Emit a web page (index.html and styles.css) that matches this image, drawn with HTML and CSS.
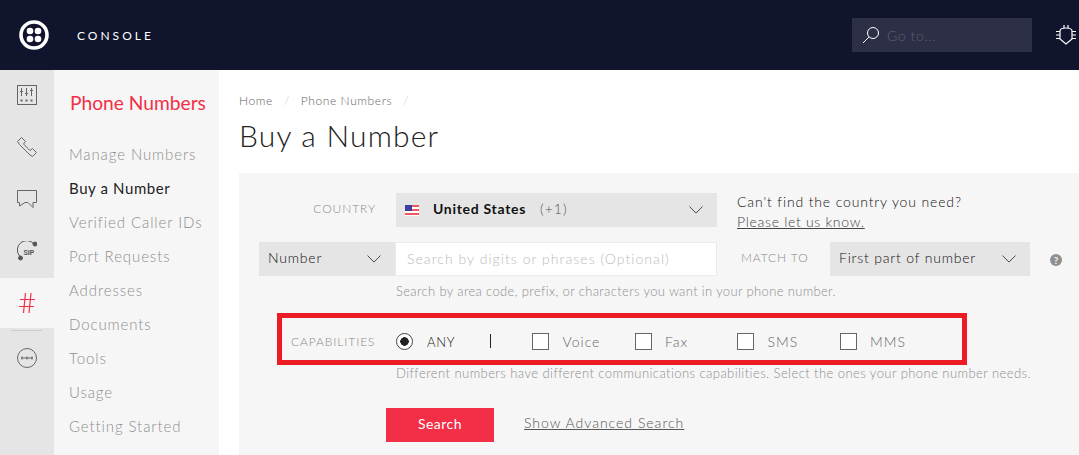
FILE: index.html
```html
<!DOCTYPE html>
<html lang="en">

<head>
    <meta charset="UTF-8">
    <title>Buy a Number</title>
    <link rel="stylesheet" href="styles.css">
</head>

<body>
    <header class="topbar">
        <svg class="logo" width="30" height="30" viewBox="0 0 30 30">
            <circle cx="15" cy="15" r="13" fill="none" stroke="#fff" stroke-width="3.6"/>
            <circle cx="11" cy="11" r="3.3" fill="#fff"/>
            <circle cx="19" cy="11" r="3.3" fill="#fff"/>
            <circle cx="11" cy="19" r="3.3" fill="#fff"/>
            <circle cx="19" cy="19" r="3.3" fill="#fff"/>
        </svg>
        <span class="brand">CONSOLE</span>
        <div class="goto">
            <svg width="18" height="18" viewBox="0 0 18 18" fill="none" stroke="#fff" stroke-width="1">
                <circle cx="11" cy="7" r="5.5"/>
                <path d="M7 11 L1 17"/>
            </svg>
            <span>Go to...</span>
        </div>
        <svg class="bug" width="20" height="22" viewBox="0 0 20 22" fill="none" stroke="#fff" stroke-width="1.2">
            <path d="M4 7 Q4 4 10 4 Q16 4 16 7 V15 L10 20 L4 15 Z"/>
            <path d="M8 1 V4 M12 1 V4 M0 7.500 H4 M16 7.500 H20 M0 11 H4 M16 11 H20 M0 14.500 H4 M16 14.500 H20"/>
        </svg>
    </header>

    <div class="page">
        <nav class="iconbar">
            <a class="icon">
                <svg width="20" height="20" viewBox="0 0 20 20" fill="none" stroke="#666">
                    <rect x="0.500" y="0.500" width="19" height="19"/>
                    <path d="M4.500 3 V11 M9.500 3 V11 M14.500 3 V11 M3 6.500 H6 M8 8.500 H11 M13 5.500 H16"/>
                    <path d="M3.500 15.500 H5.500 M8.500 15.500 H10.500 M13.500 15.500 H15.500" stroke-width="2"/>
                </svg>
            </a>
            <a class="icon">
                <svg width="20" height="20" viewBox="0 0 20 20" fill="none" stroke="#666">
                    <path d="M0.500 4.500 L4.500 0.500 L8.500 4.500 L6.500 7 L13 13.500 L15.500 11.500 L19.500 15.500 L15.500 19.500 L13 18 L2.500 7.500 Z"/>
                </svg>
            </a>
            <a class="icon">
                <svg width="20" height="18" viewBox="0 0 20 18" fill="none" stroke="#666">
                    <path d="M0.500 0.500 H19.500 V12.500 H16 V17.500 L11 12.500 H8 L2.500 16 V12.500 H0.500 Z"/>
                </svg>
            </a>
            <a class="icon">
                <svg width="20" height="20" viewBox="0 0 20 20" fill="none" stroke="#555">
                    <path d="M2.500 15 A8.500 8.500 0 0 1 17 3"/>
                    <circle cx="18" cy="3" r="2" fill="#555"/>
                    <circle cx="3.500" cy="17" r="2" fill="#555"/>
                    <text x="6.500" y="13.500" class="sip">SIP</text>
                </svg>
            </a>
            <a class="icon icon-active">
                <svg width="16" height="20" viewBox="0 0 16 20" fill="none" stroke="#f22f46" stroke-width="1.2">
                    <path d="M6.500 0 L4.500 20 M12 0 L10 20 M1 6.500 H16 M0 13.500 H15"/>
                </svg>
            </a>
            <div class="icon-line"></div>
            <a class="icon">
                <svg width="20" height="20" viewBox="0 0 20 20" fill="none" stroke="#666">
                    <circle cx="10" cy="10" r="9.500"/>
                    <path d="M4 10 H16 M5 8.500 V11.500 M10 8.500 V11.500 M15 8.500 V11.500" stroke-width="1.200"/>
                </svg>
            </a>
        </nav>

        <aside class="sidenav">
            <h2>Phone Numbers</h2>
            <ul>
                <li>Manage Numbers</li>
                <li class="current">Buy a Number</li>
                <li>Verified Caller IDs</li>
                <li>Port Requests</li>
                <li>Addresses</li>
                <li>Documents</li>
                <li>Tools</li>
                <li>Usage</li>
                <li>Getting Started</li>
            </ul>
        </aside>

        <main class="content">
            <div class="crumbs">
                <span>Home</span><i>/</i><span>Phone Numbers</span><i>/</i>
            </div>
            <h1>Buy a Number</h1>

            <section class="panel">
                <div class="row row-country">
                    <label class="field-label label-country">COUNTRY</label>
                    <div class="select select-country">
                        <svg class="flag" width="14" height="11" viewBox="0 0 14 11">
                            <rect width="14" height="11" fill="#fff"/>
                            <path d="M0 1 H14 M0 5 H14 M0 9 H14" stroke="#e8202c" stroke-width="1.500"/>
                            <rect width="7" height="6" fill="#3c3f9c"/>
                        </svg>
                        <b>United States</b>
                        <span class="code">(+1)</span>
                        <svg class="chev" width="14" height="8" viewBox="0 0 16 9" fill="none" stroke="#333"><path d="M0.500 0.500 L8 8 L15.500 0.500"/></svg>
                    </div>
                    <div class="cant">
                        <p>Can't find the country you need?</p>
                        <a>Please let us know.</a>
                    </div>
                </div>

                <div class="row row-search">
                    <div class="select select-type">
                        <span>Number</span>
                        <svg class="chev" width="14" height="8" viewBox="0 0 16 9" fill="none" stroke="#333"><path d="M0.500 0.500 L8 8 L15.500 0.500"/></svg>
                    </div>
                    <div class="search-input">Search by digits or phrases (Optional)</div>
                    <label class="field-label label-match">MATCH TO</label>
                    <div class="select select-match">
                        <span>First part of number</span>
                        <svg class="chev" width="14" height="8" viewBox="0 0 16 9" fill="none" stroke="#333"><path d="M0.500 0.500 L8 8 L15.500 0.500"/></svg>
                    </div>
                    <span class="help">?</span>
                </div>
                <p class="hint hint-search">Search by area code, prefix, or characters you want in your phone number.</p>

                <div class="caps">
                    <label class="field-label label-caps">CAPABILITIES</label>
                    <span class="radio"></span>
                    <span class="cap-any">ANY</span>
                    <span class="cap-sep"></span>
                    <span class="check"></span><span class="cap cap-wide">Voice</span>
                    <span class="check"></span><span class="cap cap-wide">Fax</span>
                    <span class="check"></span><span class="cap cap-wide">SMS</span>
                    <span class="check"></span><span class="cap">MMS</span>
                </div>
                <p class="hint hint-caps">Different numbers have different communications capabilities. Select the ones your phone number needs.</p>

                <div class="actions">
                    <button class="btn">Search</button>
                    <a class="advanced">Show Advanced Search</a>
                </div>
            </section>
        </main>
    </div>
</body>

</html>
```

FILE: styles.css
```css
/* General Styles */

body {
    font-family: 'Lato', sans-serif;
    font-weight: 300;
    margin: 0;
    height: 455px;
    overflow: hidden;
    background: #fff;
    color: #222;
}

/* Top bar */

.topbar {
    height: 70px;
    background: #10142c;
    display: flex;
    align-items: center;
    padding-left: 19px;
    color: #fff;
}

.brand {
    margin-left: 28px;
    font-size: 12px;
    font-weight: 400;
    letter-spacing: 3px;
}

.goto {
    margin-left: auto;
    width: 180px;
    height: 34px;
    box-sizing: border-box;
    padding-left: 10px;
    background: #2c2f45;
    display: flex;
    align-items: center;
    gap: 7px;
    font-size: 14px;
    letter-spacing: 0.6px;
    color: #5c5f70;
}

.bug {
    margin: 0 3px 0 24px;
}

/* Columns */

.page {
    display: flex;
    height: 385px;
}

.iconbar {
    width: 54px;
    background: #e5e5e5;
    display: flex;
    flex-direction: column;
    gap: 2px;
}

.icon {
    height: 50px;
    flex: none;
    display: flex;
    align-items: center;
    justify-content: center;
}

.icon-active {
    background: #f6f6f6;
}

.icon-line {
    height: 1px;
    flex: none;
    margin: 0 12px 0 11px;
    background: #ccc;
}

.sip {
    font-family: 'Roboto', sans-serif;
    font-size: 7px;
    font-weight: 700;
    fill: #555;
    stroke: none;
}

.sidenav {
    width: 165px;
    background: #f6f6f6;
    padding-left: 15px;
    box-sizing: border-box;
}

.sidenav h2 {
    margin: 21px 0 0 1px;
    font-size: 19.2px;
    line-height: 24px;
    font-weight: 400;
    color: #f22f46;
}

.sidenav ul {
    list-style: none;
    margin: 22px 0 0;
    padding: 0;
}

.sidenav li {
    height: 34px;
    line-height: 34px;
    font-size: 15px;
    letter-spacing: 0.9px;
    color: #8f8f8f;
}

.sidenav li.current {
    color: #222;
    font-weight: 400;
    letter-spacing: 0.6px;
}

/* Main area */

.content {
    flex: 1;
    min-width: 0;
    padding-left: 20px;
}

.crumbs {
    margin-top: 24px;
    height: 14px;
    font-size: 12px;
    line-height: 14px;
    letter-spacing: 0.6px;
    color: #666;
    display: flex;
    gap: 11px;
}

.crumbs i {
    font-style: normal;
    color: #ccc;
}

h1 {
    margin: 9px 0 0;
    font-size: 30px;
    line-height: 37px;
    font-weight: 300;
    letter-spacing: 1.2px;
    color: #222;
}

.panel {
    margin-top: 19px;
    height: 282px;
    background: #f6f6f6;
    padding-top: 20px;
    box-sizing: border-box;
}

.row {
    display: flex;
    height: 34px;
    align-items: center;
}

.field-label {
    font-size: 12px;
    letter-spacing: 0.9px;
    color: #8a8a8a;
}

.label-country {
    width: 137px;
    text-align: right;
    margin-bottom: 4px;
}

.select {
    height: 34px;
    box-sizing: border-box;
    background: #e5e5e5;
    display: flex;
    align-items: center;
    padding: 0 14px 0 9px;
    font-size: 14px;
    font-weight: 300;
    letter-spacing: 0.8px;
    color: #111;
}

.select span,
.select b {
    margin-bottom: 3px;
}

.chev {
    margin-left: auto;
}

.select-country {
    width: 321px;
    margin-left: 20px;
}

.flag {
    margin-top: 1px;
}

.select-country b {
    margin-left: 14px;
    font-weight: 700;
    letter-spacing: 0.7px;
}

.select-country .code {
    margin-left: 14px;
    letter-spacing: 1px;
    color: #555;
}

.cant {
    margin-left: 20px;
    padding-top: 4px;
    font-size: 14px;
    line-height: 20px;
    letter-spacing: 0.85px;
    color: #111;
}

.cant p {
    margin: 0;
}

.cant a {
    color: #444;
    letter-spacing: 0.7px;
    text-decoration: underline;
}

.row-search {
    margin-top: 15px;
    padding-left: 20px;
}

.select-type {
    width: 136px;
}

.search-input {
    width: 322px;
    height: 34px;
    box-sizing: border-box;
    background: #fff;
    border: 1px solid #ebebeb;
    padding-left: 11px;
    line-height: 31px;
    font-size: 14px;
    letter-spacing: 1.05px;
    color: #bbb;
}

.label-match {
    margin: 0 0 3px 24px;
    width: 89px;
}

.select-match {
    width: 200px;
}

.help {
    margin: 2px 0 0 20px;
    width: 12px;
    height: 12px;
    border-radius: 50%;
    background: #8f8f8f;
    color: #f6f6f6;
    font-size: 10px;
    line-height: 12px;
    font-weight: 700;
    text-align: center;
}

.hint {
    margin: 7px 0 0 157px;
    font-size: 13px;
    line-height: 16px;
    letter-spacing: 0.35px;
    color: #8f8f8f;
    white-space: nowrap;
}

.caps {
    margin: 14px 0 0 38px;
    width: 690px;
    height: 52px;
    box-sizing: border-box;
    border: 5px solid #ed1c24;
    display: flex;
    align-items: center;
    padding: 4px 0 0 9px;
    font-size: 14px;
    letter-spacing: 0.7px;
}

.label-caps {
    width: 105px;
}

.radio {
    width: 17px;
    height: 17px;
    box-sizing: border-box;
    border: 1px solid #444;
    border-radius: 50%;
    background: radial-gradient(circle, #222 0 4px, #fff 4.5px);
}

.cap-any {
    margin: 1px 0 0 14px;
    width: 63px;
    font-size: 13px;
    color: #222;
}

.cap-sep {
    width: 1px;
    height: 14px;
    background: #222;
}

.check {
    width: 17px;
    height: 17px;
    box-sizing: border-box;
    border: 1px solid #666;
    background: #fff;
}

.cap-sep + .check {
    margin-left: 41px;
}

.cap {
    margin-left: 13.5px;
    color: #666;
    letter-spacing: 1px;
}

.cap-wide {
    width: 72px;
}

.hint-caps {
    margin-top: 0;
    letter-spacing: 0.44px;
}

.actions {
    margin: 27px 0 0 147px;
    display: flex;
    align-items: center;
}

.btn {
    width: 108px;
    height: 34px;
    border: none;
    padding: 0 0 3px;
    background: #f22f46;
    color: #fff;
    font-family: inherit;
    font-size: 14px;
    font-weight: 400;
    letter-spacing: 0.5px;
}

.advanced {
    margin: 0 0 6px 30px;
    font-size: 14px;
    letter-spacing: 1px;
    color: #555;
    text-decoration: underline;
}
```
